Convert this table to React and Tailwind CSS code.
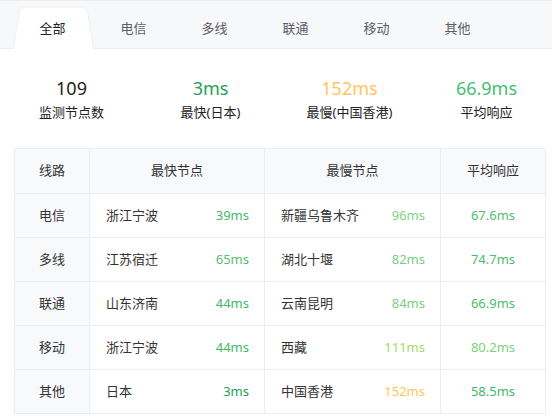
import React from "react";

const FONT = { fontFamily: '"Noto Sans", "Noto Sans CJK SC", sans-serif' };

const tabs = ["全部", "电信", "多线", "联通", "移动", "其他"];

const rows = [
  { line: "电信", fast: "浙江宁波", fastMs: "39ms", fastC: "text-[#45b86a]", slow: "新疆乌鲁木齐", slowMs: "96ms", slowC: "text-[#7fd486]", avg: "67.6ms", avgC: "text-[#4fbe6e]" },
  { line: "多线", fast: "江苏宿迁", fastMs: "65ms", fastC: "text-[#55c070]", slow: "湖北十堰", slowMs: "82ms", slowC: "text-[#76d07e]", avg: "74.7ms", avgC: "text-[#4dbc6c]" },
  { line: "联通", fast: "山东济南", fastMs: "44ms", fastC: "text-[#43b76a]", slow: "云南昆明", slowMs: "84ms", slowC: "text-[#78d17e]", avg: "66.9ms", avgC: "text-[#4bbd6d]" },
  { line: "移动", fast: "浙江宁波", fastMs: "44ms", fastC: "text-[#43b76a]", slow: "西藏", slowMs: "111ms", slowC: "text-[#a6d86c]", avg: "80.2ms", avgC: "text-[#7ad37c]" },
  { line: "其他", fast: "日本", fastMs: "3ms", fastC: "text-[#279e52]", slow: "中国香港", slowMs: "152ms", slowC: "text-[#ffc55c]", avg: "58.5ms", avgC: "text-[#40b868]" },
];

function Tabs() {
  return (
    <div className="h-[49px] bg-[#f7f8fa] border-t border-b border-[#eceef2] pl-[12px] pt-[5px] flex">
      {tabs.map((t, i) => (
        <div key={t} className="relative w-[81px] h-[43px] flex items-center justify-center">
          {i === 0 && (
            <svg className="absolute left-0 top-0" width="82" height="44" viewBox="0 0 82 44">
              <path d="M1 44 L7.3 6.5 Q8.2 1 14 1 L69 1 Q74.8 1 75.7 6.5 L81.5 44 Z" fill="#ffffff" stroke="#eef0f3" strokeWidth="1" />
              <rect x="0" y="43" width="82" height="1" fill="#ffffff" />
            </svg>
          )}
          <span className={"relative text-[13px] leading-[20px] " + (i === 0 ? "text-[#222]" : "text-[#5b5e64]")}>{t}</span>
        </div>
      ))}
    </div>
  );
}

function Stat({ value, label, color }) {
  return (
    <div className="flex flex-col items-center">
      <div className={"text-[18px] leading-[24px] " + color}>{value}</div>
      <div className="text-[13px] leading-[20px] mt-[2px] text-[#222]">{label}</div>
    </div>
  );
}

export default function App() {
  return (
    <div className="w-[552px] h-[419px] bg-white overflow-hidden" style={FONT}>
      <Tabs />
      <div className="grid grid-cols-[139px_139px_139px_135px] pl-[2px] pt-[27px] pb-[26px]">
        <Stat value="109" label="监测节点数" color="text-[#222]" />
        <Stat value="3ms" label="最快(日本)" color="text-[#279e52]" />
        <Stat value="152ms" label="最慢(中国香港)" color="text-[#ffc55c]" />
        <Stat value="66.9ms" label="平均响应" color="text-[#45be6e]" />
      </div>
      <div className="ml-[14px] w-[532px] grid grid-cols-[75px_175px_176px_105px] border-l border-t border-[#ebedf0] text-[13px] text-[#333]">
        <div className="h-[45px] bg-[#f8f9fb] border-r border-b border-[#ebedf0] flex items-center justify-center">线路</div>
        <div className="h-[45px] bg-[#f8f9fb] border-r border-b border-[#ebedf0] flex items-center justify-center">最快节点</div>
        <div className="h-[45px] bg-[#f8f9fb] border-r border-b border-[#ebedf0] flex items-center justify-center">最慢节点</div>
        <div className="h-[45px] bg-[#f8f9fb] border-r border-b border-[#ebedf0] flex items-center justify-center">平均响应</div>
        {rows.map((r) => (
          <React.Fragment key={r.line}>
            <div className="h-[44px] bg-[#f8f9fb] border-r border-b border-[#ebedf0] flex items-center justify-center">{r.line}</div>
            <div className="h-[44px] border-r border-b border-[#ebedf0] flex items-center justify-between pl-[16px] pr-[15px]">
              <span>{r.fast}</span>
              <span className={r.fastC}>{r.fastMs}</span>
            </div>
            <div className="h-[44px] border-r border-b border-[#ebedf0] flex items-center justify-between pl-[16px] pr-[15px]">
              <span>{r.slow}</span>
              <span className={r.slowC}>{r.slowMs}</span>
            </div>
            <div className={"h-[44px] border-r border-b border-[#ebedf0] flex items-center justify-center " + r.avgC}>{r.avg}</div>
          </React.Fragment>
        ))}
      </div>
    </div>
  );
}
